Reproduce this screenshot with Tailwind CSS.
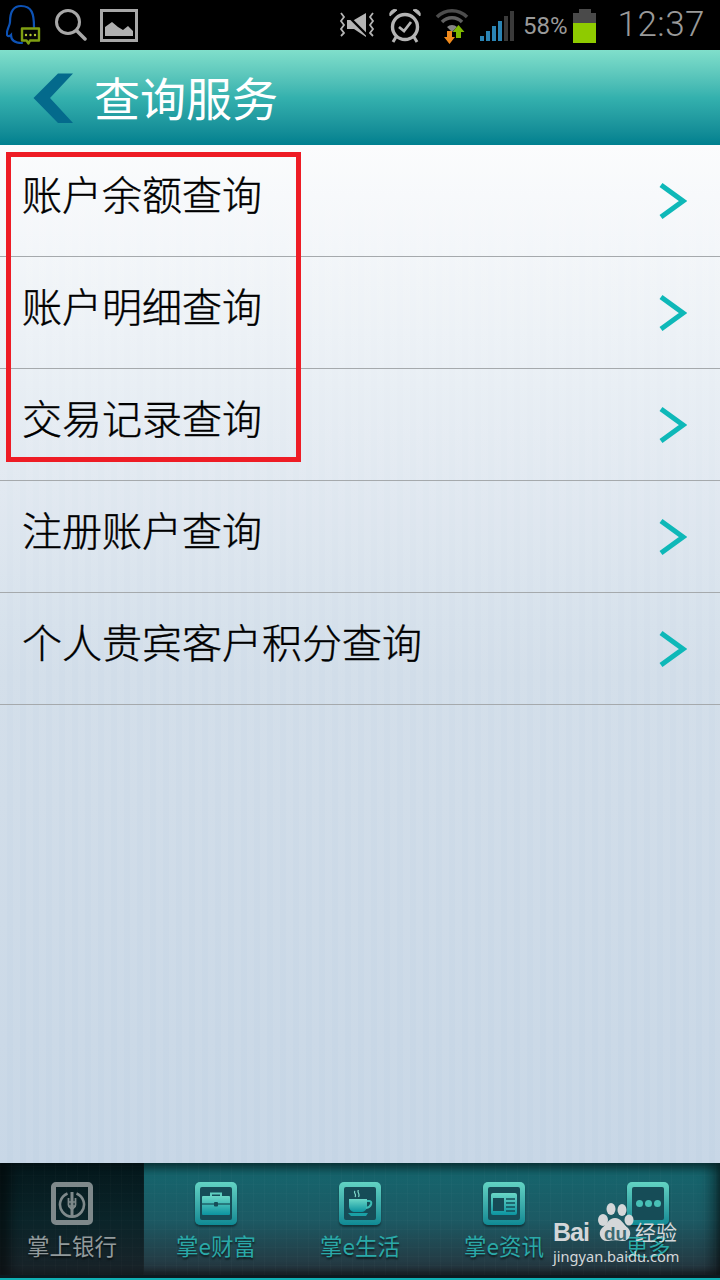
<!DOCTYPE html>
<html lang="zh-CN">
<head>
  <meta charset="UTF-8" />
  <meta name="viewport" content="width=device-width, initial-scale=1.0"/>
  <title>查询服务</title>
  <script src="https://cdn.jsdelivr.net/npm/@tailwindcss/browser@4"></script>
</head>
<body class="font-['Noto_Sans_CJK_SC','Noto_Sans',sans-serif]">
  <div class="relative w-[720px] h-[1280px] overflow-hidden flex flex-col bg-[#c8d7e6]">

    <!-- status bar -->
    <div class="h-[50px] shrink-0 bg-black flex items-center">
      <div class="flex items-center pl-[6px]">
        <svg width="40" height="46" viewBox="6 2 40 46" fill="none">
          <path d="M34 27C34 14 32 6 21 6C12 6 10 14 10 22C10 26 6 30 7 35C8 37 10 36 11 35C11 40 15 43 22 43" stroke="#0d52b5" stroke-width="2.200" stroke-linecap="round"/>
          <path d="M22 28.500h17v12h-9l-1.500 3-2-3h-4.500z" fill="#050505" stroke="#7f9f12" stroke-width="2.400" stroke-linejoin="round"/>
          <circle cx="26" cy="35" r="1.200" fill="#b5c830"/><circle cx="30.500" cy="35" r="1.200" fill="#b5c830"/><circle cx="35" cy="35" r="1.200" fill="#b5c830"/>
        </svg>
        <svg width="32" height="36" viewBox="55 7 32 36" fill="none" stroke="#a8a8a8" class="ml-[9px]">
          <circle cx="68" cy="22" r="11.500" stroke-width="3"/>
          <path d="M77 31L85 39" stroke-width="3.500" stroke-linecap="round"/>
        </svg>
        <svg width="38" height="33" viewBox="0 0 38 33" class="ml-[13px]">
          <rect x="1.500" y="1.500" width="35" height="30" fill="none" stroke="#a8a8a8" stroke-width="3"/>
          <path d="M5 27V18L12 13L18 18L23 21L28 17L33 22V27z" fill="#b0b0b0"/>
        </svg>
      </div>
      <div class="ml-auto flex items-center pr-[15px]">
        <svg width="38" height="26" viewBox="0 0 38 26" fill="none">
          <path d="M9 8h7L28 1v24l-12-8H9z" fill="#b4b4b4"/>
          <path d="M3 1l3 4-3 4 3 4-3 4 3 4-3 3M35 1l-3 4 3 4-3 4 3 4-3 4 3 3" stroke="#b4b4b4" stroke-width="1.800"/>
          <path d="M7 1L31 25" stroke="#000" stroke-width="2.400"/>
        </svg>
        <svg width="34" height="36" viewBox="0 0 34 36" fill="none" stroke="#b4b4b4" class="ml-[12px]">
          <circle cx="17" cy="20" r="12.500" stroke-width="3.400"/>
          <path d="M11 20l5 4 7-9" stroke-width="2.800"/>
          <path d="M2 9a5 5 0 0 1 7-6zM32 9a5 5 0 0 0-7-6z" fill="#b4b4b4" stroke-width="1"/>
          <path d="M8 30l-3 5M26 30l3 5" stroke-width="3"/>
        </svg>
        <svg width="34" height="38" viewBox="0 0 34 38" fill="none" class="ml-[13px]">
          <path d="M2 11a21 21 0 0 1 30 0" stroke="#4c4c4c" stroke-width="3.500"/>
          <path d="M7 16a14 14 0 0 1 20 0" stroke="#606060" stroke-width="3.500"/>
          <path d="M12 21a7 7 0 0 1 10 0l-5 5z" fill="#858585"/>
          <path d="M12 25h5v6h3l-5.500 7l-5.500-7h3z" fill="#f08a1d"/>
          <path d="M21 32v-6h-3.500l6-7l6 7h-3.500v6z" fill="#7fb800"/>
        </svg>
        <div class="ml-[11px] flex items-end gap-[2px] h-[32px]">
          <div class="w-[4px] h-[5px] bg-[#2b84b4]"></div>
          <div class="w-[4px] h-[10px] bg-[#2b84b4]"></div>
          <div class="w-[4px] h-[15px] bg-[#2b84b4]"></div>
          <div class="w-[4px] h-[20px] bg-[#2b84b4]"></div>
          <div class="w-[4px] h-[25px] bg-[#3a3a3a]"></div>
          <div class="w-[4px] h-[30px] bg-[#3a3a3a]"></div>
        </div>
        <span class="ml-[9px] text-[24px] leading-none text-[#9a9a9a] font-['Roboto',sans-serif] mt-[2px]">58%</span>
        <div class="ml-[6px] flex flex-col items-center mt-[2px]">
          <div class="w-[12px] h-[4px] bg-[#4a4a4a]"></div>
          <div class="w-[23px] h-[10px] bg-[#4a4a4a]"></div>
          <div class="w-[23px] h-[20px] bg-[#8fcb00]"></div>
        </div>
        <span class="ml-[21px] text-[35px] leading-none text-[#9a9a9a] font-['Roboto',sans-serif] font-light tracking-[0.5px] -mt-[2px]">12:37</span>
      </div>
    </div>

    <!-- title bar -->
    <div class="h-[95px] shrink-0 flex items-center bg-linear-to-b from-[#80dfcb] via-[#34b1ae] to-[#00808f]">
      <svg width="42" height="50" viewBox="0 0 42 50" class="ml-[33px]">
        <path d="M0.500 25L25 0.500H40L17 25L40 50H25z" fill="#046a8c"/>
      </svg>
      <h1 class="ml-[19px] text-[46px] leading-none text-white font-normal -mt-[4px]">查询服务</h1>
    </div>

    <!-- menu list -->
    <div class="flex-1 flex flex-col bg-[image:repeating-linear-gradient(90deg,rgba(255,255,255,0.06)_0_7px,rgba(255,255,255,0)_7px_13px),linear-gradient(180deg,#fbfcfd_0%,#d1dde9_52%,#c5d5e5_100%)]">
      <div class="h-[112px] shrink-0 border-b border-[#a5a9ac] flex items-center justify-between pl-[22px] pr-[33px]">
        <span class="text-[40px] leading-none font-light text-black [-webkit-text-stroke:0.4px_#000] -mt-[16px]">账户余额查询</span>
        <svg width="28" height="38" viewBox="0 0 28 38" fill="none"><path d="M2 3L24 19L2 35" stroke="#0eb8b8" stroke-width="5"/></svg>
      </div>
      <div class="h-[112px] shrink-0 border-b border-[#a5a9ac] flex items-center justify-between pl-[22px] pr-[33px]">
        <span class="text-[40px] leading-none font-light text-black [-webkit-text-stroke:0.4px_#000] -mt-[16px]">账户明细查询</span>
        <svg width="28" height="38" viewBox="0 0 28 38" fill="none"><path d="M2 3L24 19L2 35" stroke="#0eb8b8" stroke-width="5"/></svg>
      </div>
      <div class="h-[112px] shrink-0 border-b border-[#a5a9ac] flex items-center justify-between pl-[22px] pr-[33px]">
        <span class="text-[40px] leading-none font-light text-black [-webkit-text-stroke:0.4px_#000] -mt-[16px]">交易记录查询</span>
        <svg width="28" height="38" viewBox="0 0 28 38" fill="none"><path d="M2 3L24 19L2 35" stroke="#0eb8b8" stroke-width="5"/></svg>
      </div>
      <div class="h-[112px] shrink-0 border-b border-[#a5a9ac] flex items-center justify-between pl-[22px] pr-[33px]">
        <span class="text-[40px] leading-none font-light text-black [-webkit-text-stroke:0.4px_#000] -mt-[16px]">注册账户查询</span>
        <svg width="28" height="38" viewBox="0 0 28 38" fill="none"><path d="M2 3L24 19L2 35" stroke="#0eb8b8" stroke-width="5"/></svg>
      </div>
      <div class="h-[112px] shrink-0 border-b border-[#a5a9ac] flex items-center justify-between pl-[22px] pr-[33px]">
        <span class="text-[40px] leading-none font-light text-black [-webkit-text-stroke:0.4px_#000] -mt-[16px]">个人贵宾客户积分查询</span>
        <svg width="28" height="38" viewBox="0 0 28 38" fill="none"><path d="M2 3L24 19L2 35" stroke="#0eb8b8" stroke-width="5"/></svg>
      </div>
    </div>

    <!-- bottom tabs -->
    <div class="h-[117px] shrink-0 flex flex-col bg-[#0c1a20]">
      <div class="h-[112px] grid grid-cols-5 shadow-[inset_0_6px_8px_rgba(0,0,0,0.4),inset_-10px_0_12px_rgba(0,0,0,0.35),inset_0_-4px_6px_rgba(0,0,0,0.3)] bg-[image:repeating-linear-gradient(90deg,rgba(255,255,255,0.02)_0_1px,rgba(255,255,255,0)_1px_11px),repeating-linear-gradient(0deg,rgba(255,255,255,0.015)_0_1px,rgba(255,255,255,0)_1px_9px),linear-gradient(180deg,#14666e_0%,#1c5a64_50%,#26323b_100%)]">
        <div class="flex flex-col items-center pt-[19px] shadow-[inset_10px_0_12px_rgba(0,0,0,0.5)] bg-[image:repeating-linear-gradient(90deg,rgba(255,255,255,0.015)_0_1px,rgba(255,255,255,0)_1px_11px),repeating-linear-gradient(0deg,rgba(255,255,255,0.012)_0_1px,rgba(255,255,255,0)_1px_9px),linear-gradient(180deg,#04171b_0%,#0a2429_50%,#1a2329_100%)]">
          <div class="w-[42px] h-[43px] rounded-[5px] border-[5px] border-[#7f898b] flex items-center justify-center">
            <svg width="28" height="28" viewBox="0 0 28 28" fill="none" stroke="#7f898b">
              <path d="M9.500 3.500a12 12 0 1 0 9 0" stroke-width="2.600"/>
              <path d="M10.500 8v7c0 3 3.500 3 3.500 5c0-2 3.500-2 3.500-5V8" stroke-width="1.800"/>
              <path d="M14 2v24" stroke-width="3"/>
              <path d="M10 12h8M10 16h8" stroke-width="1.400"/>
            </svg>
          </div>
          <span class="text-[22.500px] leading-none text-[#929a9c] mt-[9px] [text-shadow:0_2px_2px_rgba(0,0,0,0.6)]">掌上银行</span>
        </div>
        <div class="flex flex-col items-center pt-[19px]">
          <div class="w-[42px] h-[43px] p-[5px] rounded-[5px] bg-linear-to-b from-[#62d3c3] to-[#0d8a94] shadow-[0_2px_2px_rgba(0,0,0,0.4)]">
            <div class="w-full h-full rounded-[2px] bg-[#164c57] flex items-center justify-center">
              <svg width="28" height="23" viewBox="0 0 28 23">
                <defs><linearGradient id="caseFill" x1="0" y1="0" x2="0" y2="1"><stop offset="0" stop-color="#6ad6c6"/><stop offset="1" stop-color="#0c94a0"/></linearGradient></defs>
                <path d="M9 5V1.500h10V5" fill="none" stroke="#5fcfc0" stroke-width="2"/>
                <path d="M1 4h26a1 1 0 0 1 1 1v17a1 1 0 0 1-1 1H1a1 1 0 0 1-1-1V5a1 1 0 0 1 1-1z" fill="url(#caseFill)"/>
                <path d="M0 12h28" stroke="#164c57" stroke-width="1.200"/>
                <rect x="12" y="10" width="4" height="4.500" rx="1" fill="#164c57"/>
              </svg>
            </div>
          </div>
          <span class="text-[22.500px] leading-none text-[#2aa9a8] mt-[9px] [text-shadow:0_2px_2px_rgba(0,0,0,0.6)]">掌e财富</span>
        </div>
        <div class="flex flex-col items-center pt-[19px]">
          <div class="w-[42px] h-[43px] p-[5px] rounded-[5px] bg-linear-to-b from-[#62d3c3] to-[#0d8a94] shadow-[0_2px_2px_rgba(0,0,0,0.4)]">
            <div class="w-full h-full rounded-[2px] bg-[#164c57] flex items-center justify-center">
              <svg width="28" height="28" viewBox="0 0 28 28" fill="none">
                <defs><linearGradient id="cupFill" x1="0" y1="0" x2="0" y2="1"><stop offset="0" stop-color="#6ad6c6"/><stop offset="1" stop-color="#0c94a0"/></linearGradient></defs>
                <path d="M9 1c-2 2 2 3 0 6M12.500 0c-2 2 2 4 0 7" stroke="#7fd8c8" stroke-width="1.200"/>
                <path d="M3 9h18v7c0 4-3 6-6 6H9c-3 0-6-2-6-6z" fill="url(#cupFill)"/>
                <path d="M21 11h2.500c3 0 2.500 6-3.500 7" stroke="#3cbcb4" stroke-width="2"/>
                <path d="M2 23h20l-2 3H5z" fill="#1aa0a6"/>
              </svg>
            </div>
          </div>
          <span class="text-[22.500px] leading-none text-[#2aa9a8] mt-[9px] [text-shadow:0_2px_2px_rgba(0,0,0,0.6)]">掌e生活</span>
        </div>
        <div class="flex flex-col items-center pt-[19px]">
          <div class="w-[42px] h-[43px] p-[5px] rounded-[5px] bg-linear-to-b from-[#62d3c3] to-[#0d8a94] shadow-[0_2px_2px_rgba(0,0,0,0.4)]">
            <div class="w-full h-full rounded-[2px] bg-[#164c57] flex items-center justify-center">
              <svg width="26" height="22" viewBox="0 0 26 22">
                <defs><linearGradient id="newsFill" x1="0" y1="0" x2="0" y2="1"><stop offset="0" stop-color="#6ad6c6"/><stop offset="1" stop-color="#0c94a0"/></linearGradient></defs>
                <rect width="26" height="22" rx="2" fill="url(#newsFill)"/>
                <rect x="2" y="5" width="11" height="13" fill="#164c57"/>
                <path d="M15 6h9M15 10h9M15 14h9M15 18h9" stroke="#164c57" stroke-width="1.600"/>
              </svg>
            </div>
          </div>
          <span class="text-[22.500px] leading-none text-[#2aa9a8] mt-[9px] [text-shadow:0_2px_2px_rgba(0,0,0,0.6)]">掌e资讯</span>
        </div>
        <div class="flex flex-col items-center pt-[19px]">
          <div class="w-[42px] h-[43px] p-[5px] rounded-[5px] bg-linear-to-b from-[#62d3c3] to-[#0d8a94] shadow-[0_2px_2px_rgba(0,0,0,0.4)]">
            <div class="w-full h-full rounded-[2px] bg-[#164c57] flex items-center justify-center gap-[2px]">
              <div class="w-[7px] h-[7px] rounded-full bg-[#48c0b6]"></div>
              <div class="w-[7px] h-[7px] rounded-full bg-[#48c0b6]"></div>
              <div class="w-[7px] h-[7px] rounded-full bg-[#48c0b6]"></div>
            </div>
          </div>
          <span class="text-[22.500px] leading-none text-[#2aa9a8] mt-[9px] [text-shadow:0_2px_2px_rgba(0,0,0,0.6)]">更多</span>
        </div>
      </div>
      <div class="h-[2px] mt-auto bg-[#10b0b4]"></div>
    </div>

    <!-- red highlight drawn over the screenshot -->
    <div class="absolute left-[6px] top-[152px] w-[295px] h-[310px] border-[5px] border-[#ee1c25]"></div>

    <!-- baidu watermark -->
    <div class="absolute left-[552px] top-[1201px] w-[130px] h-[66px] text-[#d4d7d9]">
      <svg width="37" height="40" viewBox="0 0 37 40" class="absolute left-[45px] top-[2px]" fill="#d4d7d9">
        <ellipse cx="6" cy="17" rx="5" ry="6"/><ellipse cx="14" cy="6" rx="4.500" ry="6"/><ellipse cx="25" cy="7" rx="4.500" ry="6"/><ellipse cx="32" cy="17" rx="4.500" ry="5.500"/>
        <path d="M18 15c6 0 8 6 13 10 5 5 1 14-6 13-5-1-9-1-14 0-7 1-11-8-6-13 5-4 7-10 13-10z"/>
      </svg>
      <span class="absolute left-[1px] top-[19px] text-[25px] leading-none font-bold tracking-[-1px] font-['Liberation_Sans',sans-serif]">Bai</span>
      <span class="absolute left-[52px] top-[23px] text-[19px] leading-none font-bold text-[#3d6a72] font-['Liberation_Sans',sans-serif]">du</span>
      <span class="absolute left-[83px] top-[20px] text-[21px] leading-none">经验</span>
      <span class="absolute left-[1px] top-[48px] text-[14.600px] leading-none font-['Noto_Sans',sans-serif]">jingyan.baidu.com</span>
    </div>
  </div>
</body>
</html>
